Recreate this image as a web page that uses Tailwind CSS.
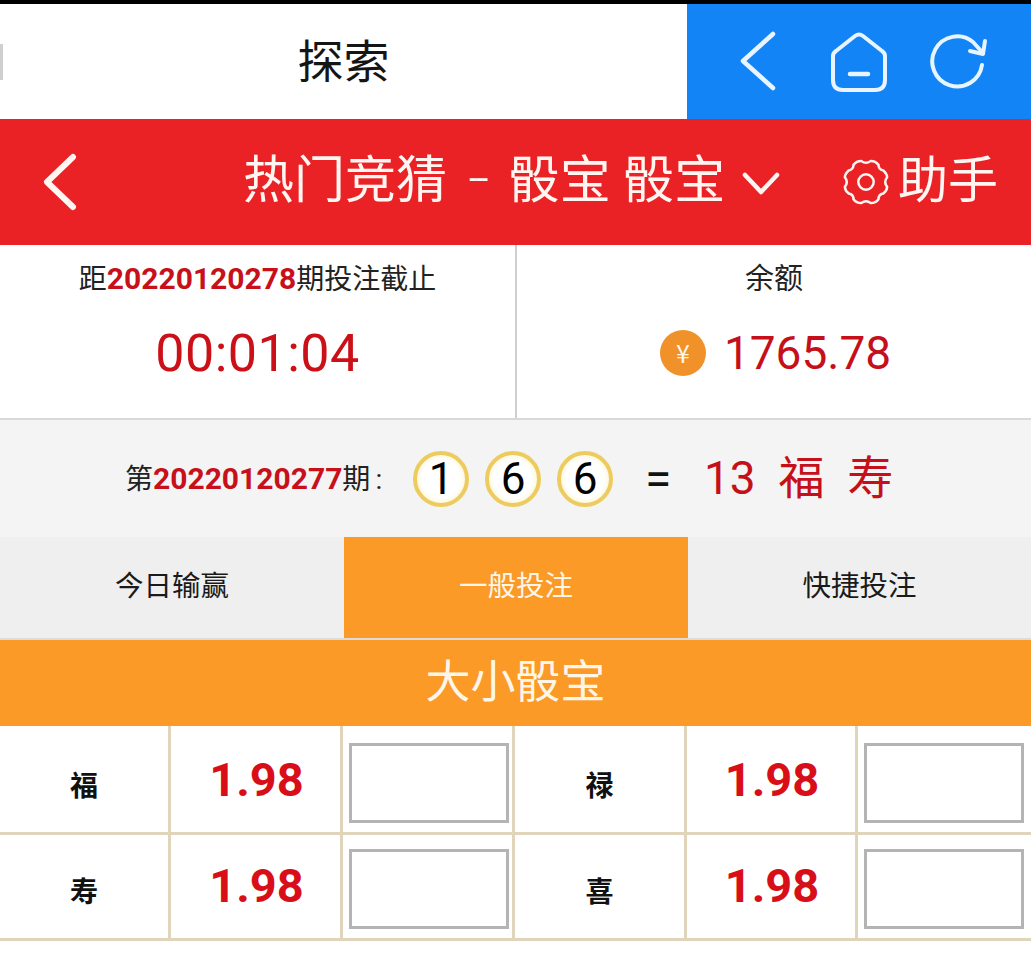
<!DOCTYPE html>
<html lang="zh-CN">
<head>
  <meta charset="UTF-8" />
  <meta name="viewport" content="width=device-width, initial-scale=1.0" />
  <title>骰宝</title>
  <script src="https://cdn.jsdelivr.net/npm/@tailwindcss/browser@4"></script>
</head>
<body class="bg-white w-[1031px] h-[961px] overflow-hidden font-['Roboto','Noto_Sans_CJK_SC',sans-serif]">
  <div class="h-1 bg-black"></div>

  <!-- browser bar -->
  <div class="h-[115px] flex relative">
    <div class="absolute left-0 top-[40px] w-[3px] h-[36px] bg-[#cfcfcf]"></div>
    <div class="w-[687px] flex items-center justify-center text-[46px] text-[#151515] pt-[2px]">探索</div>
    <div class="flex-1 bg-[#1284f5] flex items-center pl-[52px]">
      <svg width="38" height="62" viewBox="0 0 38 62" fill="none" stroke="#e8f4ff" stroke-width="4.5" stroke-linecap="round" stroke-linejoin="round"><path d="M34 3 L4 30 L34 57"/></svg>
      <svg class="ml-[53px]" width="58" height="60" viewBox="0 0 58 60" fill="none" stroke="#e8f4ff" stroke-width="4" stroke-linecap="round" stroke-linejoin="round"><path d="M3 24 Q3 21 6 19 L25 4 Q29 1 33 4 L52 19 Q55 21 55 24 V48 Q55 58 45 58 H13 Q3 58 3 48 Z"/><path d="M20 42 H38" stroke-width="4.5"/></svg>
      <svg class="ml-[42px]" width="58" height="58" viewBox="0 0 58 58" fill="none" stroke="#e8f4ff" stroke-width="4" stroke-linecap="round" stroke-linejoin="round"><path d="M52 32 A25 25 0 1 1 43 9 L53 20"/><path d="M55 8 L53 21 L40 18"/></svg>
    </div>
  </div>

  <!-- red header -->
  <div class="h-[126px] bg-[#ea2226] flex items-center text-[#fff6f2] relative">
    <svg class="ml-[43px]" width="34" height="58" viewBox="0 0 34 58" fill="none" stroke="#fff6f2" stroke-width="6" stroke-linecap="round" stroke-linejoin="round"><path d="M30 4 L4 29 L30 54"/></svg>
    <div class="ml-[166px] w-[476px] text-[51px] leading-none whitespace-pre pb-[3px]">热门竞猜<span class="ml-[20px] mr-[18px] text-[36px] relative top-[-5px]">–</span>骰宝 骰宝</div>
    <svg class="ml-[23px] mt-[4px]" width="38" height="24" viewBox="0 0 38 24" fill="none" stroke="#fff6f2" stroke-width="4.5" stroke-linecap="round" stroke-linejoin="round"><path d="M3 3 L19 20 L35 3"/></svg>
    <svg class="ml-[62px]" width="48" height="48" viewBox="0 0 50 50" fill="none" stroke="#fff6f2" stroke-width="2.6" stroke-linejoin="round"><path d="M20 3 Q25 7 30 3 Q35 3 38 7 Q38 12 43 13 Q47 17 47 20 Q43 25 47 30 Q47 34 43 37 Q38 38 38 43 Q35 47 30 47 Q25 43 20 47 Q15 47 12 43 Q12 38 7 37 Q3 34 3 30 Q7 25 3 20 Q3 17 7 13 Q12 12 12 7 Q15 3 20 3 Z"/><circle cx="25" cy="25" r="8"/></svg>
    <div class="ml-[8px] text-[50px] leading-none pb-[3px]">助手</div>
  </div>

  <!-- countdown and balance -->
  <div class="h-[175px] flex bg-white border-b-2 border-[#d9d9d9]">
    <div class="w-[517px] border-r-2 border-[#cfcfcf] flex flex-col items-center pt-[16px]">
      <div class="text-[28px] leading-[36px] text-[#222] whitespace-nowrap">距<span class="text-[30px] font-bold text-[#c8101a]">20220120278</span>期投注截止</div>
      <div class="mt-[26px] text-[52px] leading-[60px] text-[#cc1018] tracking-[0.5px]">00:01:04</div>
    </div>
    <div class="flex-1 flex flex-col items-center pt-[16px]">
      <div class="text-[29px] leading-[36px] text-[#222]">余额</div>
      <div class="mt-[26px] ml-[3px] flex items-center gap-[18px] h-[60px]">
        <div class="w-[46px] h-[46px] rounded-full bg-[#f0912a] text-[#fff6ea] text-[25px] flex items-center justify-center font-['Noto_Sans_CJK_SC',sans-serif]">¥</div>
        <span class="text-[46px] leading-[60px] text-[#c5101c]">1765.78</span>
      </div>
    </div>
  </div>

  <!-- last draw -->
  <div class="h-[117px] bg-[#f4f4f4] flex items-center pl-[125px]">
    <div class="text-[28px] text-[#222] whitespace-nowrap w-[288px]">第<span class="text-[30px] font-bold text-[#c8101a]">20220120277</span>期<span class="ml-[5px]">:</span></div>
    <div class="flex gap-[16px]">
      <div class="w-[56px] h-[56px] rounded-full border-[4px] border-[#edcb5e] bg-radial from-white from-55% to-[#fbeba8] flex items-center justify-center text-[44px] text-black">1</div>
      <div class="w-[56px] h-[56px] rounded-full border-[4px] border-[#edcb5e] bg-radial from-white from-55% to-[#fbeba8] flex items-center justify-center text-[44px] text-black">6</div>
      <div class="w-[56px] h-[56px] rounded-full border-[4px] border-[#edcb5e] bg-radial from-white from-55% to-[#fbeba8] flex items-center justify-center text-[44px] text-black">6</div>
    </div>
    <div class="ml-[32px] text-[48px] text-[#111] w-[59px]">=</div>
    <div class="text-[46px] text-[#c5101c] whitespace-pre">13  福  寿</div>
  </div>

  <!-- tabs -->
  <div class="h-[103px] flex text-[28.5px] border-b-2 border-[#dcdcdc] bg-[#efefef] text-[#1a1a1a]">
    <div class="w-[344px] flex items-center justify-center">今日输赢</div>
    <div class="w-[344px] flex items-center justify-center bg-[#fb9a26] text-[#fff6ea]">一般投注</div>
    <div class="flex-1 flex items-center justify-center">快捷投注</div>
  </div>

  <!-- section title -->
  <div class="h-[86px] bg-[#fb9a26] text-[#fff6ea] text-[45px] flex items-center justify-center">大小骰宝</div>

  <!-- odds table -->
  <div class="grid grid-cols-[171px_172px_172px_172px_171px_173px] grid-rows-[109px_106px]">
    <div class="border-r-[3px] border-b-[3px] border-[#e0d4bb] flex items-center justify-center text-[28px] font-bold text-[#111] pt-[15px]">福</div>
    <div class="border-r-[3px] border-b-[3px] border-[#e0d4bb] flex items-center justify-center text-[47px] font-bold text-[#d80f18] pt-[3px] pl-[2px]">1.98</div>
    <div class="border-r-[3px] border-b-[3px] border-[#e0d4bb] pl-[6px] pt-[17px]"><input class="block w-[160px] h-[80px] border-[3px] border-[#b4b4b4] bg-white" /></div>
    <div class="border-r-[3px] border-b-[3px] border-[#e0d4bb] flex items-center justify-center text-[28px] font-bold text-[#111] pt-[15px]">禄</div>
    <div class="border-r-[3px] border-b-[3px] border-[#e0d4bb] flex items-center justify-center text-[47px] font-bold text-[#d80f18] pt-[3px] pl-[2px]">1.98</div>
    <div class="border-b-[3px] border-[#e0d4bb] pl-[6px] pt-[17px]"><input class="block w-[160px] h-[80px] border-[3px] border-[#b4b4b4] bg-white" /></div>

    <div class="border-r-[3px] border-b-[3px] border-[#e0d4bb] flex items-center justify-center text-[28px] font-bold text-[#111] pt-[12px]">寿</div>
    <div class="border-r-[3px] border-b-[3px] border-[#e0d4bb] flex items-center justify-center text-[47px] font-bold text-[#d80f18] pl-[2px]">1.98</div>
    <div class="border-r-[3px] border-b-[3px] border-[#e0d4bb] pl-[6px] pt-[14px]"><input class="block w-[160px] h-[80px] border-[3px] border-[#b4b4b4] bg-white" /></div>
    <div class="border-r-[3px] border-b-[3px] border-[#e0d4bb] flex items-center justify-center text-[28px] font-bold text-[#111] pt-[12px]">喜</div>
    <div class="border-r-[3px] border-b-[3px] border-[#e0d4bb] flex items-center justify-center text-[47px] font-bold text-[#d80f18] pl-[2px]">1.98</div>
    <div class="border-b-[3px] border-[#e0d4bb] pl-[6px] pt-[14px]"><input class="block w-[160px] h-[80px] border-[3px] border-[#b4b4b4] bg-white" /></div>
  </div>
</body>
</html>
